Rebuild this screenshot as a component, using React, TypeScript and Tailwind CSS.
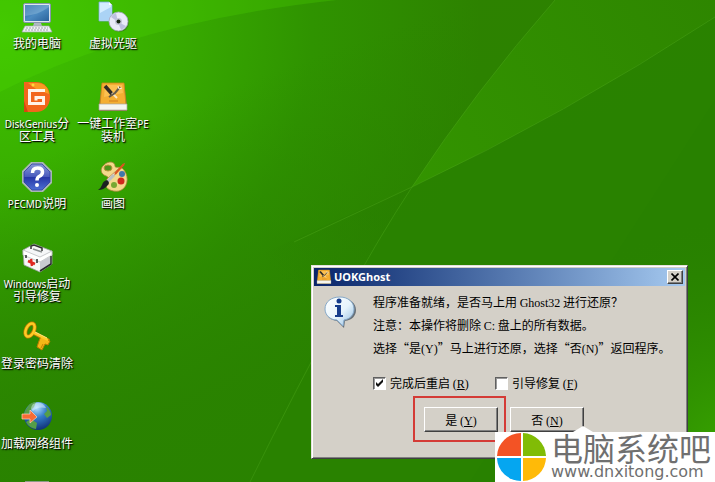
import type { ReactNode } from "react";

type DesktopItem = {
  label: ReactNode;
  icon: ReactNode;
  cell: string;
};

type IconProps = {
  className?: string;
};

function ComputerIcon() {
  return (
    <svg viewBox="0 0 32 32" className="size-8" aria-hidden="true">
      <defs>
        <linearGradient id="screen" x1="0" y1="0" x2="1" y2="1">
          <stop offset="0" stopColor="#1d5fa3" />
          <stop offset="0.5" stopColor="#4d8cc2" />
          <stop offset="1" stopColor="#2b639b" />
        </linearGradient>
      </defs>
      <rect x="2.500" y="2.500" width="27" height="19" rx="1.500" fill="#dfe6ee" stroke="#8797ab" />
      <rect x="4" y="4" width="24" height="16" fill="url(#screen)" />
      <path d="M4 15C12 14 20 12 28 6V4H4Z" fill="#9bc3df" opacity="0.4" />
      <path d="M13 22h7l1 3h-9z" fill="#aeb8c2" />
      <path d="M4 25h24l3 6H1z" fill="#eef1f3" stroke="#9da6ae" strokeWidth="0.7" />
      <path d="M5 27h22M4 29h24" stroke="#9ba5ad" strokeWidth="1" strokeDasharray="2 1" />
    </svg>
  );
}

function VirtualDriveIcon() {
  return (
    <svg viewBox="0 0 32 32" className="size-8" aria-hidden="true">
      <path d="M2 1h10l3 3v16H2z" fill="#d4edff" stroke="#79a9d8" strokeWidth="0.8" />
      <path d="M3 12 14 6v13H3z" fill="#abd3f5" />
      <path d="M12 1v3h3z" fill="#fff" />
      <circle cx="22.500" cy="21.500" r="9.500" fill="#33591f" opacity="0.5" />
      <circle cx="21.500" cy="20.500" r="9.500" fill="#e9eaf8" stroke="#a4a6bf" strokeWidth="0.8" />
      <path d="m21 21-7-5a9 9 0 0 1 5-4zM21 21l8 4a9 9 0 0 1-5 4z" fill="#bdbfe0" />
      <circle cx="21.500" cy="20.500" r="3.500" fill="#c3c5d8" />
      <circle cx="21.500" cy="20.500" r="2" fill="#172711" />
    </svg>
  );
}

function DiskGeniusIcon() {
  return (
    <svg viewBox="0 0 32 32" className="size-8" aria-hidden="true">
      <path d="M3 1h12c8 0 14 6 14 15S23 31 15 31H3z" fill="#f2661c" />
      <path d="M7 2h9c7 0 11 4 12 11L15 8Z" fill="#f99b23" />
      <path d="M3 20 7 31H3z" fill="#d94610" />
      <path d="M24 9.500H8.500v13H22.500v-6H15v3" fill="none" stroke="#fff3e8" strokeWidth="3" />
      <circle cx="12" cy="4" r="1.500" fill="#ffd93c" />
    </svg>
  );
}

function ToolboxIcon({ className = "size-8" }: IconProps) {
  return (
    <svg viewBox="0 0 32 32" className={className} aria-hidden="true">
      <path d="M5 2h22l3 22v6H2v-6z" fill="#8d744a" />
      <path d="M5 2h22l2 22H3z" fill="#f4ae32" stroke="#c98519" strokeWidth="0.8" />
      <path d="M8 4h17l1 8-19 4z" fill="#ffc85e" opacity="0.7" />
      <path d="M2 23h28v6H2z" fill="#f5f5ef" stroke="#aaa89d" strokeWidth="0.7" />
      <path d="m8 5 7 8" stroke="#302b26" strokeWidth="3.500" />
      <path d="m15 12 5 5" stroke="#fbe9c4" strokeWidth="2" />
      <path d="m23 6-5 6-6 4" fill="none" stroke="#655b4b" strokeWidth="2" />
      <path d="m21 5 1 3 3-1" fill="none" stroke="#f5eedc" strokeWidth="1" />
      <path d="M12 20h9" stroke="#d17e1d" />
    </svg>
  );
}

function HelpIcon() {
  return (
    <svg viewBox="0 0 32 32" className="size-8" aria-hidden="true">
      <defs>
        <linearGradient id="help" x1="0" y1="0" x2="0" y2="1">
          <stop offset="0" stopColor="#8798d8" />
          <stop offset="0.48" stopColor="#4a5bbd" />
          <stop offset="0.52" stopColor="#2637a7" />
          <stop offset="1" stopColor="#4c6fd3" />
        </linearGradient>
      </defs>
      <path d="M10 1h12l9 9v12l-9 9H10l-9-9V10z" fill="#a8b5b6" />
      <path d="M11 3h10l8 8v10l-8 8H11l-8-8V11z" fill="url(#help)" stroke="#2c3ca2" strokeWidth="0.8" />
      <path d="M11.500 12q0-5 5-5t5 4q0 3-3.500 4.500-2 1-2 4" fill="none" stroke="#fff" strokeWidth="3.500" />
      <circle cx="16" cy="24" r="2" fill="#fff" />
    </svg>
  );
}

function PaintIcon() {
  return (
    <svg viewBox="0 0 32 32" className="size-8" aria-hidden="true">
      <path
        d="M7 4c5-5 11-3 11 1 0 3 5-1 9 4 6 8 3 19-5 21-7 1-14-2-13-7 1-4 4-7 0-8-6-2-6-8-2-11z"
        fill="#f3d98c"
        stroke="#a78137"
        strokeWidth="0.8"
      />
      <ellipse cx="11" cy="7" rx="4" ry="3" fill="#4e941b" stroke="#bb943c" />
      <circle cx="25" cy="13" r="3" fill="#4177ac" />
      <circle cx="24" cy="20" r="3.500" fill="#cf291d" />
      <circle cx="17" cy="24" r="3" fill="#78a832" />
      <path d="M28 2 12 20l-3 2 1-4z" fill="#f6eed6" stroke="#ad6a2d" strokeWidth="0.7" />
      <path d="m27 3-9 10" stroke="#db541e" strokeWidth="2" />
      <path d="m17 14-7 7" stroke="#bbbfc0" strokeWidth="3" />
      <path d="M10 19q4 3 0 6-3 4-9 4 3-2 4-5 1-4 5-5z" fill="#1c2221" />
    </svg>
  );
}

function FirstAidIcon() {
  return (
    <svg viewBox="0 0 32 32" className="size-8" aria-hidden="true">
      <path d="M2 9 13 3l18 7v13l-12 8L3 24z" fill="#f6f7f8" stroke="#999fa0" strokeWidth="0.8" />
      <path d="m2 9 17 7 12-6v4l-12 7-17-7z" fill="#fff" stroke="#bbbebf" strokeWidth="0.8" />
      <path d="m19 21 11-6v8l-11 7z" fill="#c8cbd0" />
      <path d="M10 8V5l3-1 8 3v3" fill="none" stroke="#303231" strokeWidth="1.500" />
      <path d="m12 8 9 3" stroke="#8b9090" strokeWidth="1.500" />
      <path d="M5 14v3m11 1v4m3 8 11-7v-8" fill="none" stroke="#292b2c" strokeWidth="1.500" />
      <path d="m10 18 1 7m-4-5 7 3" stroke="#df2722" strokeWidth="2.500" />
    </svg>
  );
}

function KeyIcon() {
  return (
    <svg viewBox="0 0 32 32" className="size-8" aria-hidden="true">
      <g fill="none" stroke="#bd7b00">
        <ellipse cx="9" cy="9" rx="4" ry="7" transform="rotate(25 9 9)" strokeWidth="4" />
        <path d="m13 12 15 8" strokeWidth="4" />
      </g>
      <path d="m20 15 9 5-2 4-3-1-3 6-5-3 2-6z" fill="#f5b716" stroke="#bd7b00" />
      <g fill="none" stroke="#ffcb24">
        <ellipse cx="9" cy="9" rx="4" ry="7" transform="rotate(25 9 9)" strokeWidth="2.500" />
        <path d="m13 12 14 7" strokeWidth="2.500" />
      </g>
      <path d="m14 11 12 6" stroke="#ffed80" strokeWidth="1" />
      <path d="m22 23-2 4" stroke="#c68300" strokeWidth="1" />
    </svg>
  );
}

function NetworkIcon() {
  return (
    <svg viewBox="0 0 32 32" className="size-8" aria-hidden="true">
      <defs>
        <radialGradient id="globe" cx="0.45" cy="0.2" r="0.8">
          <stop offset="0" stopColor="#b8e4ff" />
          <stop offset="0.45" stopColor="#347dca" />
          <stop offset="1" stopColor="#113379" />
        </radialGradient>
      </defs>
      <circle cx="17" cy="15" r="14" fill="url(#globe)" />
      <path d="M6 7Q9 1 15 1l-2 5-4 4-2 5-4 1q0-6 3-9zm4 11 6 4-1 6q-7-1-10-7zM25 5q5 5 5 9l-4 3-3-4 3-3z" fill="#559e48" />
      <path d="M12 3q9-4 13 4Q17 5 12 10 8 8 12 3z" fill="#d9f2ff" opacity="0.5" />
      <path d="M1 13h8V9l7 7-7 6v-4H1z" fill="#f76b35" stroke="#ffd3ba" strokeWidth="0.7" />
    </svg>
  );
}

function InfoIcon() {
  return (
    <svg viewBox="0 0 32 32" className="size-8 shrink-0" aria-hidden="true">
      <defs>
        <linearGradient id="bubble" x1="0" y1="0" x2="1" y2="1">
          <stop offset="0" stopColor="#fff" />
          <stop offset="0.55" stopColor="#e6f4fc" />
          <stop offset="1" stopColor="#8db9df" />
        </linearGradient>
      </defs>
      <path d="M17 2c9 0 15 5 15 12 0 6-4 10-11 11l-1 7-7-7C6 24 2 20 2 14 2 7 8 2 17 2z" fill="#4c5965" opacity="0.8" />
      <path
        d="M16 1c8 0 14 5 14 12 0 6-4 10-10 11l-1 6-6-6C6 24 1 19 1 13 1 6 7 1 16 1z"
        fill="url(#bubble)"
        stroke="#86a9c9"
      />
      <circle cx="15" cy="5" r="2.500" fill="#173d8c" />
      <path d="M11 9h6v10h2v2h-8v-2h2v-8h-2z" fill="#173d8c" />
    </svg>
  );
}

function BrandLogo() {
  return (
    <svg viewBox="0 0 50 50" className="size-[50px] shrink-0" aria-hidden="true">
      <path d="M24 1v23H0A24 24 0 0 1 24 1z" fill="#f35325" />
      <path d="M26 1a24 24 0 0 1 23 23H26z" fill="#81bc06" />
      <path d="M0 26h24v23A24 24 0 0 1 0 26z" fill="#05a6f0" />
      <path d="M26 26h23a24 24 0 0 1-23 23z" fill="#ffba08" />
    </svg>
  );
}

function Wallpaper() {
  return (
    <svg viewBox="0 0 715 482" preserveAspectRatio="none" className="absolute inset-0 size-full" aria-hidden="true">
      <defs>
        <radialGradient id="base" gradientUnits="userSpaceOnUse" cx="0" cy="30" r="480">
          <stop offset="0" stopColor="#3fc400" />
          <stop offset="0.35" stopColor="#38ac00" />
          <stop offset="0.65" stopColor="#2f9300" />
          <stop offset="1" stopColor="#2d8200" />
        </radialGradient>
        <linearGradient id="lower" gradientUnits="userSpaceOnUse" x1="60" y1="150" x2="160" y2="420">
          <stop offset="0" stopColor="#298200" stopOpacity="0" />
          <stop offset="1" stopColor="#298200" stopOpacity="0.9" />
        </linearGradient>
        <radialGradient id="corner" gradientUnits="userSpaceOnUse" cx="730" cy="450" r="230">
          <stop offset="0" stopColor="#38a400" />
          <stop offset="1" stopColor="#298200" stopOpacity="0" />
        </radialGradient>
        <linearGradient id="wedge" gradientUnits="userSpaceOnUse" x1="413" y1="184" x2="715" y2="0">
          <stop offset="0" stopColor="#339400" />
          <stop offset="1" stopColor="#2e8600" />
        </linearGradient>
        <linearGradient id="shade" gradientUnits="userSpaceOnUse" x1="413" y1="184" x2="290" y2="290">
          <stop offset="0" stopColor="#277c00" stopOpacity="0.6" />
          <stop offset="1" stopColor="#277c00" stopOpacity="0" />
        </linearGradient>
      </defs>
      <rect width="715" height="482" fill="url(#base)" />
      <path d="M0 0H337Q135 22 0 92z" fill="#50dc00" opacity="0.25" />
      <rect width="715" height="482" fill="url(#lower)" />
      <path d="M555 0Q476 90 412 187 563 116 715 17V0z" fill="url(#wedge)" />
      <path d="M412 187 367 257Q300 370 250 482H180L240 264 337 220z" fill="url(#shade)" />
      <path d="M412 187Q320 325 250 482H715V17Q563 116 412 187z" fill="#2a8200" opacity="0.7" />
      <path d="M470 482 715 100V482z" fill="#257d00" opacity="0.1" />
      <rect x="485" y="220" width="230" height="262" fill="url(#corner)" />
      <path d="M555 0Q476 90 412 187T250 482M715 17Q563 116 412 187L294 242" fill="none" stroke="#55ae20" opacity="0.35" />
    </svg>
  );
}

function Latin({ children }: { children: ReactNode }) {
  return <span className="font-['Liberation_Serif',serif] leading-none">{children}</span>;
}

function LabelLatin({ children }: { children: ReactNode }) {
  return <span className="font-['Noto_Sans',sans-serif] text-[10px] leading-none">{children}</span>;
}

function Mnemonic({ letter }: { letter: string }) {
  return (
    <Latin>
      (<u>{letter}</u>)
    </Latin>
  );
}

function CheckOption({ id, label, letter, checked = false }: { id: string; label: string; letter: string; checked?: boolean }) {
  return (
    <div className="flex items-center gap-1">
      <span className="relative flex">
        <input
          id={id}
          type="checkbox"
          defaultChecked={checked}
          className="peer size-[13px] appearance-none border border-t-[#606060] border-r-white border-b-white border-l-[#606060] bg-white shadow-[inset_1px_1px_0_#999]"
        />
        <svg
          viewBox="0 0 13 13"
          className="pointer-events-none absolute inset-0 hidden size-[13px] peer-checked:block"
          aria-hidden="true"
        >
          <path d="M3 5v3l2 2 5-5V2L5 7z" fill="#111" />
        </svg>
      </span>
      <label htmlFor={id} className="whitespace-nowrap">
        {label} <Mnemonic letter={letter} />
      </label>
    </div>
  );
}

function DialogButton({ label, letter }: { label: string; letter: string }) {
  return (
    <button
      type="button"
      className="h-[25px] w-[74px] border border-t-white border-r-[#404040] border-b-[#404040] border-l-white bg-[#d4d0c8] leading-4 shadow-[inset_-1px_-1px_0_#808080]"
    >
      {label} <Mnemonic letter={letter} />
    </button>
  );
}

const desktopItems: DesktopItem[] = [
  { label: "我的电脑", icon: <ComputerIcon />, cell: "col-start-1 row-start-1" },
  { label: "虚拟光驱", icon: <VirtualDriveIcon />, cell: "col-start-2 row-start-1" },
  { label: <><LabelLatin>DiskGenius</LabelLatin>分<br />区工具</>, icon: <DiskGeniusIcon />, cell: "col-start-1 row-start-2" },
  { label: <>一键工作室<LabelLatin>PE</LabelLatin><br />装机</>, icon: <ToolboxIcon />, cell: "col-start-2 row-start-2" },
  { label: <><LabelLatin>PECMD</LabelLatin>说明</>, icon: <HelpIcon />, cell: "col-start-1 row-start-3" },
  { label: "画图", icon: <PaintIcon />, cell: "col-start-2 row-start-3" },
  { label: <><LabelLatin>Windows</LabelLatin>启动<br />引导修复</>, icon: <FirstAidIcon />, cell: "col-start-1 row-start-4" },
  { label: "登录密码清除", icon: <KeyIcon />, cell: "col-start-1 row-start-5" },
  { label: "加载网络组件", icon: <NetworkIcon />, cell: "col-start-1 row-start-6" },
];

function GhostDialog() {
  return (
    <section
      role="dialog"
      aria-labelledby="dialog-title"
      className="absolute top-[265px] left-[311px] w-[377px] border border-t-[#e5e2dc] border-r-[#404040] border-b-[#404040] border-l-[#e5e2dc] bg-[#d4d0c8] p-0.5 pb-[26px] text-xs text-black shadow-[inset_1px_1px_0_#fff,inset_-1px_-1px_0_#808080]"
    >
      <header className="flex h-[18px] items-center gap-0.5 bg-linear-to-r from-[#0a246a] to-[#a6caf0] px-0.5">
        <ToolboxIcon className="size-4" />
        <h1 id="dialog-title" className="flex-1 font-['Noto_Sans',sans-serif] text-[11px] leading-4 font-bold text-white">
          UOKGhost
        </h1>
        <button
          type="button"
          aria-label="关闭"
          className="flex h-3.5 w-4 items-center justify-center border border-t-white border-r-[#404040] border-b-[#404040] border-l-white bg-[#d4d0c8] shadow-[inset_-1px_-1px_0_#808080]"
        >
          <svg viewBox="0 0 8 8" className="size-2" aria-hidden="true">
            <path d="m0.500 0.500 7 7m0-7-7 7" stroke="#000" strokeWidth="1.600" />
          </svg>
        </button>
      </header>

      <div className="flex gap-[17px] pt-1 pl-2.5">
        <div className="pt-1.5">
          <InfoIcon />
        </div>
        <div className="flex-1">
          <div className="leading-[23px] whitespace-nowrap">
            <p>程序准备就绪，是否马上用 <Latin>Ghost32</Latin> 进行还原？</p>
            <p>注意：本操作将删除 <Latin>C:</Latin> 盘上的所有数据。</p>
            <p>选择“是<Latin>(Y)</Latin>”马上进行还原，选择“否<Latin>(N)</Latin>”返回程序。</p>
          </div>
          <div className="mt-4 grid grid-cols-[122px_1fr] leading-4">
            <CheckOption id="restart" label="完成后重启" letter="R" checked />
            <CheckOption id="boot-repair" label="引导修复" letter="F" />
          </div>
          <div className="mt-4 flex gap-3 pl-[51px]">
            <div className="relative flex">
              <DialogButton label="是" letter="Y" />
              <span className="pointer-events-none absolute -top-[11px] -right-2 -bottom-2.5 -left-[11px] border-2 border-[#d43b36]" />
            </div>
            <DialogButton label="否" letter="N" />
          </div>
        </div>
      </div>
    </section>
  );
}

export default function App() {
  return (
    <main
      lang="zh-CN"
      className="relative h-screen overflow-hidden bg-[#2b8a00] font-['Noto_Sans_CJK_SC',sans-serif] text-xs"
    >
      <Wallpaper />

      <nav className="relative grid auto-rows-[80px] grid-cols-[74px_78px] pt-px">
        {desktopItems.map((item, index) => (
          <a
            key={index}
            href="#"
            className={`flex flex-col items-center gap-[3px] text-center leading-[13px] whitespace-nowrap text-white [text-shadow:1px_1px_1px_#000,1px_1px_2px_#0008] ${item.cell}`}
          >
            {item.icon}
            <span>{item.label}</span>
          </a>
        ))}
        <div className="col-start-1 row-start-7 mx-auto h-1 w-6 bg-[#8b9c87]" />
      </nav>

      <GhostDialog />

      <footer className="absolute right-0 bottom-0 flex h-[50px] w-[220px] items-start gap-1 bg-white pl-0.5 text-[#6f6f6f]">
        <span className="absolute bottom-full left-[78px] h-1.5 w-5 bg-white [clip-path:polygon(50%_0,100%_100%,0_100%)]" />
        <BrandLogo />
        <div className="whitespace-nowrap">
          <p className="text-[32px] leading-[30px]">电脑系统吧</p>
          <a href="#" className="block font-['DejaVu_Sans',sans-serif] text-base leading-5">
            www.dnxitong.com
          </a>
        </div>
      </footer>
    </main>
  );
}
